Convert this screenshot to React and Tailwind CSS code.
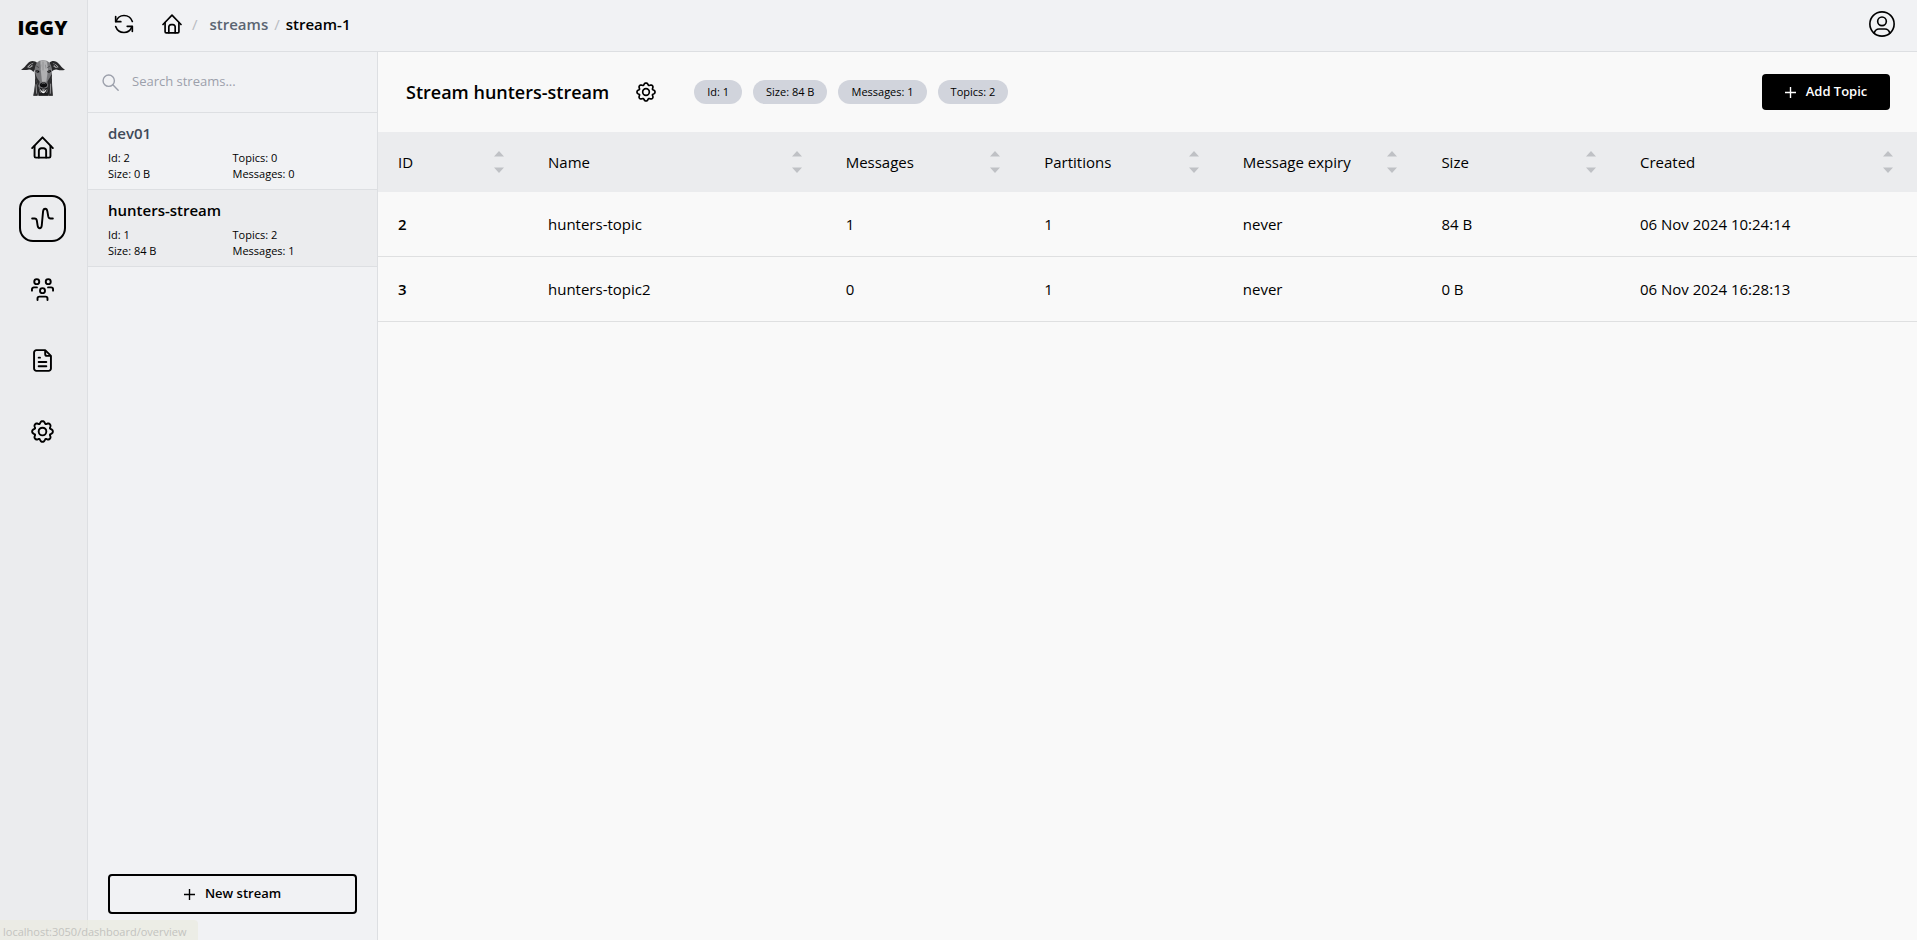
import React from 'react';

const streams = [
  { name: 'dev01', id: 2, topics: 0, size: '0 B', messages: 0, active: false },
  { name: 'hunters-stream', id: 1, topics: 2, size: '84 B', messages: 1, active: true }
];

const stats = ['Id: 1', 'Size: 84 B', 'Messages: 1', 'Topics: 2'];

const columns = [
  { label: 'ID', width: 'w-[150px]' },
  { label: 'Name', width: 'w-[19.34%]' },
  { label: 'Messages', width: '' },
  { label: 'Partitions', width: '' },
  { label: 'Message expiry', width: '' },
  { label: 'Size', width: '' },
  { label: 'Created', width: 'w-[19.3%]' }
];

const topics = [
  { id: 2, name: 'hunters-topic', messages: 1, partitions: 1, expiry: 'never', size: '84 B', created: '06 Nov 2024 10:24:14' },
  { id: 3, name: 'hunters-topic2', messages: 0, partitions: 1, expiry: 'never', size: '0 B', created: '06 Nov 2024 16:28:13' }
];

const Icon = ({ className, strokeWidth = 2, children }) => (
  <svg
    className={className}
    viewBox="0 0 24 24"
    fill="none"
    stroke="currentColor"
    strokeWidth={strokeWidth}
    strokeLinecap="round"
    strokeLinejoin="round"
    aria-hidden="true"
  >
    {children}
  </svg>
);

const HomeIcon = ({ className }) => (
  <Icon className={className}>
    <path d="M1.2 12.6 12 1.4l10.8 11.2" />
    <path d="M3.7 10.4v10.8c0 .8.6 1.4 1.4 1.4h13.8c.8 0 1.4-.6 1.4-1.4V10.4" />
    <path d="M8.2 22.4v-7a2.6 2.6 0 0 1 2.6-2.6h2.4a2.6 2.6 0 0 1 2.6 2.6v7" />
  </Icon>
);

const StreamIcon = ({ className }) => (
  <Icon className={className}>
    <path d="M1.2 12h2.6c1.4 0 2.1.8 2.3 2.2l.8 5.3c.6 3.6 3.9 3.6 4.3 0L12.6 4.6c.5-3.7 3.9-3.7 4.5 0l.9 5.2c.3 1.5 1 2.2 2.4 2.2h2.4" />
  </Icon>
);

const UsersIcon = ({ className }) => (
  <Icon className={className}>
    <circle cx="6" cy="3.8" r="2.6" />
    <circle cx="18" cy="3.8" r="2.6" />
    <circle cx="12" cy="13.2" r="2.6" />
    <path d="M1 13.2v-1.4a2 2 0 0 1 2-2h3.2M23 13.2v-1.4a2 2 0 0 0-2-2h-3.2" />
    <path d="M6.8 23v-1.6a2 2 0 0 1 2-2h6.4a2 2 0 0 1 2 2V23" />
  </Icon>
);

const FileIcon = ({ className }) => (
  <Icon className={className}>
    <path d="M14.8 1.2H5.6a2.4 2.4 0 0 0-2.4 2.4v16.8a2.4 2.4 0 0 0 2.4 2.4h12.8a2.4 2.4 0 0 0 2.4-2.4V7.2l-6-6v4a2 2 0 0 0 2 2h4" />
    <path d="M8 9h1.4M8 13.6h8M8 18h8" />
  </Icon>
);

// Eight rounded teeth around a circle
const gearPath = `M${Array.from({ length: 96 }, (_, i) => {
  const angle = (i / 96) * Math.PI * 2;
  const radius = 9.8 + 1.2 * Math.cos(angle * 8) - 0.2 * Math.cos(angle * 16);
  return `${(12 + radius * Math.sin(angle)).toFixed(2)} ${(12 - radius * Math.cos(angle)).toFixed(2)}`;
}).join('L')}Z`;

const GearIcon = ({ className }) => (
  <Icon className={className}>
    <circle cx="12" cy="12" r="4" />
    <path d={gearPath} />
  </Icon>
);

const RefreshIcon = ({ className }) => (
  <Icon className={className}>
    <path d="M2 3v6.2h6.2" />
    <path d="M2.4 9C4 4.5 7.6 1.8 12 1.8c4.4 0 8.4 2.7 10 7.2" />
    <path d="M22 21v-6.2h-6.2" />
    <path d="M21.6 15c-1.6 4.5-5.2 7.2-9.6 7.2-4.4 0-8.4-2.7-10-7.2" />
  </Icon>
);

const SearchIcon = ({ className }) => (
  <Icon className={className}>
    <circle cx="9.5" cy="9.5" r="8" />
    <path d="m15.3 15.3 7.5 7.5" />
  </Icon>
);

const UserIcon = ({ className }) => (
  <Icon className={className} strokeWidth={1.5}>
    <circle cx="12" cy="12" r="11.2" />
    <circle cx="12" cy="9.5" r="4" />
    <path d="M4.8 20.3c.8-2.5 2.2-3.7 4.4-3.7h5.6c2.2 0 3.6 1.2 4.4 3.7" />
  </Icon>
);

const PlusIcon = ({ className }) => (
  <svg className={className} viewBox="0 0 12 12" fill="none" stroke="currentColor" strokeWidth="1.5" aria-hidden="true">
    <path d="M6 0v12M0 6h12" />
  </svg>
);

const SortIcon = () => (
  <svg className="h-[22px] w-[10px] text-[#bfc1c5]" viewBox="0 0 10 22" fill="currentColor" aria-hidden="true">
    <path d="M5 0 10 5.500H0zM5 22 0 16.500h10z" />
  </svg>
);

const DogLogo = ({ className }) => (
  <svg className={className} viewBox="0 0 132 106" aria-hidden="true">
    {/* neck */}
    <path d="M42 44c2 20 0 40-6 62h60c-2-20-4-42-3-62z" fill="#5e5e60" />
    <path d="M42 50c1 20-1 38-4 56h10l8-20zM93 50c0 20 0 38 2 56H84l-6-22z" fill="#2f2f31" />
    <path d="M50 82l4 24h28l4-24-8 16H57z" fill="#1d1d1f" />
    {/* ears */}
    <path d="M0 28C13 21 17 9 26 4c8-4 18-2 23 4l-6 18-6 9c-3-5-8-8-15-7-8 1-16 1-22 0z" fill="#29292b" />
    <path d="M132 28c-12-7-16-19-26-24-7-3-16-2-21 3l6 19 3 7c4-5 9-7 15-5 8 2 16 2 23 0z" fill="#29292b" />
    <path d="M18 21C23 14 29 9 38 7l-7 8 6 1-10 7zM113 21c-5-7-10-11-18-13l6 7-5 2 8 6z" fill="#a5a5a7" />
    <path d="M25 20l7-8M107 20l-7-8" stroke="#161618" strokeWidth="3" />
    {/* head */}
    <path d="M47 8c5-6 12-8 19-8s15 2 20 8c6 9 8 19 6 30-2 14-8 22-10 32-3 11-6 22-15 22s-14-11-17-22c-3-10-8-18-9-32-1-11 1-21 6-30z" fill="#77777a" />
    <path d="M58 3c5-3 14-3 20 1l3 23-5 37H63l-4-37z" fill="#b0b0b2" />
    <path d="M66 4v26M60 13l-2 12M73 13l2 12" stroke="#838386" strokeWidth="2" />
    <path d="M42 36c3 12 7 20 14 28l-2 12c-7-11-12-24-12-36zM93 36c-3 12-9 20-14 28l2 12c7-11 12-24 12-36z" fill="#2c2c2e" />
    <path d="M46 17l8 5M87 17l-8 5" stroke="#4d4d4f" strokeWidth="3" />
    {/* eyes */}
    <path d="M43 33c3-6 9-6 13 2-5 3-9 3-13-2zM91 33c-3-6-9-6-13 2 5 3 9 3 13-2z" fill="#0c0c0e" />
    <circle cx="48" cy="32" r="1.500" fill="#eee" />
    <circle cx="84" cy="32" r="1.500" fill="#eee" />
    {/* muzzle */}
    <path d="M57 72c2-7 19-7 21 0 2 6-3 10-10 10s-13-4-11-10z" fill="#0d0d0f" />
    <path d="M62 71c3-3 8-3 11 0" stroke="#8b8b8d" strokeWidth="2" fill="none" />
    <path d="M56 80c6 6 18 6 24 0l-4 15c-3 8-13 8-16 0z" fill="#19191b" />
    <path d="M57 86c2 6 4 11 10 13 6-2 8-7 10-13l-3 2-3 5h-8l-3-5z" fill="#f6f6f6" />
    <path d="M63 87h9l-2 5h-5z" fill="#9a9a9c" />
    <path d="M45 72l2 28M89 70l-1 30" stroke="#8f8f91" strokeWidth="3" />
  </svg>
);

const navItems = [
  { label: 'Overview', icon: HomeIcon, active: false },
  { label: 'Streams', icon: StreamIcon, active: true },
  { label: 'Clients', icon: UsersIcon, active: false },
  { label: 'Logs', icon: FileIcon, active: false },
  { label: 'Settings', icon: GearIcon, active: false }
];

const Sidebar = () => (
  <aside className="flex w-[88px] shrink-0 flex-col items-center border-r border-[#dddfe2] bg-[#ebecee] pr-[2px]">
    <span className="mt-[14px] text-[20px] leading-7 font-black">IGGY</span>
    <DogLogo className="mt-[18px] h-9 w-11" />
    <nav className="mt-7 flex flex-col gap-6">
      {navItems.map((item) => (
        <a
          key={item.label}
          href="#"
          aria-label={item.label}
          className={`flex h-[47px] w-[47px] items-center justify-center rounded-[14px] border-2 ${
            item.active ? 'border-black' : 'border-transparent'
          }`}
        >
          <item.icon className="h-[23px] w-[23px]" />
        </a>
      ))}
    </nav>
  </aside>
);

const TopBar = () => (
  <header className="flex h-[52px] shrink-0 items-center border-b border-[#dddfe2] bg-[#f1f2f4] pr-[22px] pb-[3px] pl-[26px]">
    <button aria-label="Refresh" className="cursor-pointer">
      <RefreshIcon className="h-5 w-5" />
    </button>
    <nav className="ml-7 flex items-center text-[15px] font-semibold">
      <a href="#" aria-label="Home">
        <HomeIcon className="h-5 w-5" />
      </a>
      <span className="ml-[10px] font-normal text-[#b9bcc2]">/</span>
      <a href="#" className="ml-3 text-[#5b6572]">streams</a>
      <span className="mx-[6px] font-normal text-[#b9bcc2]">/</span>
      <a href="#">stream-1</a>
    </nav>
    <button aria-label="Account" className="ml-auto cursor-pointer">
      <UserIcon className="h-[26px] w-[26px]" />
    </button>
  </header>
);

const StreamList = () => (
  <section className="flex w-[290px] shrink-0 flex-col border-r border-[#dddfe2] bg-[#f1f2f4]">
    <div className="flex h-[61px] items-center border-b border-[#dddfe2] px-[14px]">
      <label htmlFor="search" aria-label="Search streams">
        <SearchIcon className="h-[17px] w-[17px] text-[#9ca0ab]" />
      </label>
      <input
        id="search"
        type="text"
        placeholder="Search streams..."
        className="ml-[13px] w-full min-w-0 bg-transparent text-[13px] outline-none placeholder:text-[#9ca0ab]"
      />
    </div>

    <ul>
      {streams.map((stream) => (
        <li key={stream.id} className={`border-b border-[#dddfe2] ${stream.active ? 'bg-[#ebecee]' : ''}`}>
          <a href="#" className="block px-5 pt-2 pb-[7px]">
            <h3 className={`text-[15px] leading-6 font-semibold ${stream.active ? 'text-black' : 'text-[#414a59]'}`}>
              {stream.name}
            </h3>
            <div className="mt-[5px] grid grid-cols-2 text-[11px] leading-4">
              <span>Id: {stream.id}</span>
              <span>Topics: {stream.topics}</span>
              <span>Size: {stream.size}</span>
              <span>Messages: {stream.messages}</span>
            </div>
          </a>
        </li>
      ))}
    </ul>

    <button className="mx-5 mt-auto mb-[26px] flex h-10 cursor-pointer items-center justify-center gap-[10px] rounded border-2 border-black text-[13px] font-semibold">
      <PlusIcon className="h-[11px] w-[11px]" />
      New stream
    </button>
  </section>
);

const App = () => {
  return (
    <div className="relative flex h-screen bg-[#f9f9f9] font-['Open_Sans',sans-serif] text-black">
      <Sidebar />

      <div className="flex min-w-0 flex-1 flex-col">
        <TopBar />

        <div className="flex min-h-0 flex-1">
          <StreamList />

          <main className="min-w-0 flex-1">
            {/* Stream header */}
            <div className="flex h-20 items-center pr-[27px] pl-7">
              <h1 className="text-[18px] font-semibold">Stream hunters-stream</h1>
              <button aria-label="Stream settings" className="ml-[27px] cursor-pointer">
                <GearIcon className="h-5 w-5" />
              </button>
              <div className="ml-[38px] flex gap-[11px]">
                {stats.map((stat) => (
                  <span key={stat} className="rounded-full bg-[#d1d4dc] px-[13px] text-[11px] leading-6">
                    {stat}
                  </span>
                ))}
              </div>
              <button className="ml-auto flex h-9 w-32 cursor-pointer items-center justify-center gap-[10px] rounded bg-black text-[13px] font-semibold text-white">
                <PlusIcon className="h-[11px] w-[11px]" />
                Add Topic
              </button>
            </div>

            {/* Topics */}
            <table className="w-full table-fixed border-separate border-spacing-0 text-left text-[15px]">
              <thead>
                <tr className="h-[60px] bg-[#ebecee]">
                  {columns.map((column) => (
                    <th key={column.label} className={`pr-6 pl-5 font-normal ${column.width}`}>
                      <div className="flex items-center justify-between">
                        {column.label}
                        <SortIcon />
                      </div>
                    </th>
                  ))}
                </tr>
              </thead>
              <tbody className="[&_td]:border-b [&_td]:border-[#dfe0e1] [&_td]:px-5">
                {topics.map((topic) => (
                  <tr key={topic.id} className="h-[65px]">
                    <td className="font-semibold">{topic.id}</td>
                    <td>{topic.name}</td>
                    <td>{topic.messages}</td>
                    <td>{topic.partitions}</td>
                    <td>{topic.expiry}</td>
                    <td>{topic.size}</td>
                    <td>{topic.created}</td>
                  </tr>
                ))}
              </tbody>
            </table>
          </main>
        </div>
      </div>

      {/* Link preview */}
      <div className="absolute bottom-0 left-0 rounded-tr bg-[#ebebe2]/80 pt-1 pr-3 pl-[3px] text-[11px] leading-4 text-[#c3c3bf]">
        localhost:3050/dashboard/overview
      </div>
    </div>
  );
};

export default App;
